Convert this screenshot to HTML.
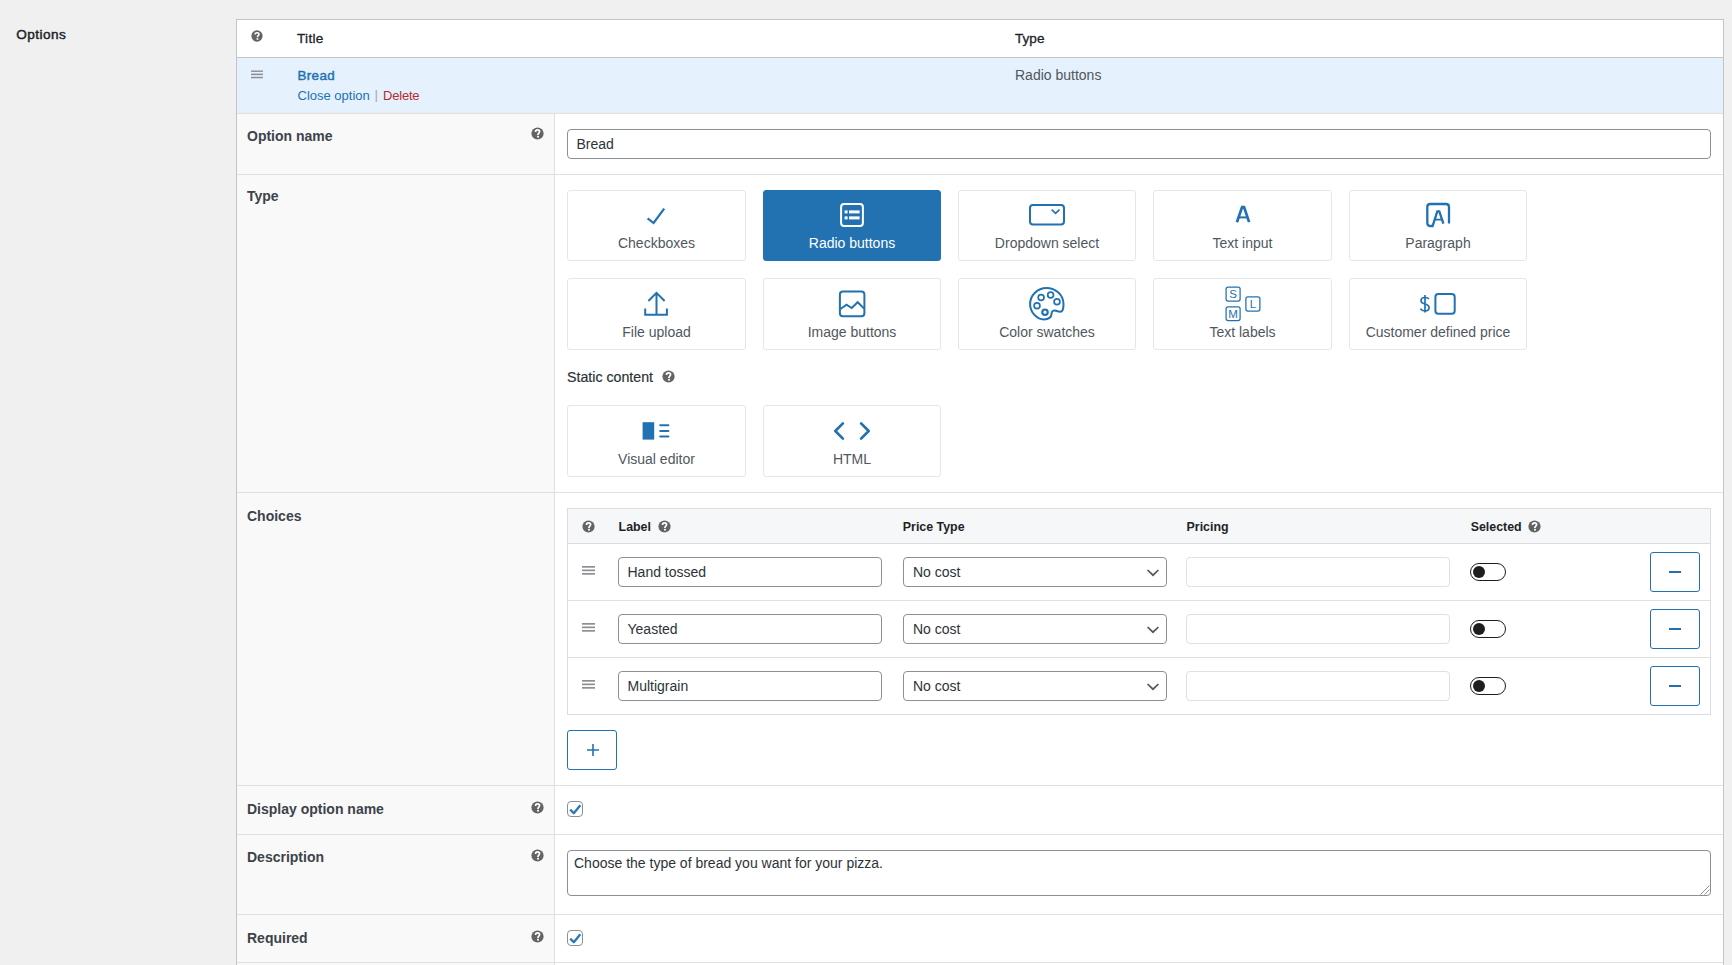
<!DOCTYPE html>
<html><head><meta charset="utf-8"><style>
*{box-sizing:border-box;margin:0;padding:0}
html,body{width:1732px;height:965px;overflow:hidden}
body{background:#f0f0f1;position:relative;font-family:"Liberation Sans",sans-serif;color:#3c434a;font-size:14px}
.a{position:absolute}
.t{position:absolute;white-space:nowrap;line-height:1}
.b{font-weight:bold}
.sb{-webkit-text-stroke:0.45px currentColor}
.ln{position:absolute;background:#e0e0e0}
.hp{position:absolute;width:13px;height:13px}
.box{position:absolute;height:71px;border:1px solid #e6e6e6;border-radius:3px;background:#fff}
.box.sel{background:#2271b1;border-color:#2271b1}
.box svg{position:absolute;left:-1px;top:-1px}
.box .cap{position:absolute;left:0;right:0;top:45.2px;text-align:center;line-height:14px;font-size:14px;color:#50575e;white-space:nowrap}
.box.sel .cap{color:#fff}
.inp{position:absolute;height:30px;border:1px solid #8c8f94;border-radius:4px;background:#fff}
.dis{border-color:#e0e0e0;background:#fff}
.btn{position:absolute;width:50px;height:40px;border:1px solid #2271b1;border-radius:3px;background:#fff}
.tog{position:absolute;width:36px;height:18px;border:1.5px solid #1e1e1e;border-radius:9px;background:#fff}
.tog::after{content:"";position:absolute;left:1.5px;top:1.5px;width:12px;height:12px;border-radius:50%;background:#1e1e1e}
.chk{position:absolute;width:16px;height:16px;border:1px solid #8c8f94;border-radius:4px;background:#fff}
</style></head><body>
<svg width="0" height="0" style="position:absolute"><defs><symbol id="help" viewBox="0 0 13 13"><circle cx="6.5" cy="6.5" r="6.1" fill="#626365"/><path d="M4.5 4.9C4.5 3.6 5.4 2.9 6.6 2.9C7.8 2.9 8.6 3.6 8.6 4.6C8.6 5.9 7 6.1 7 7.3V7.9" fill="none" stroke="#fff" stroke-width="1.7"/><rect x="6.1" y="8.8" width="1.8" height="1.8" fill="#fff"/></symbol><symbol id="drag" viewBox="0 0 13 9"><rect x="0" y="0" width="13" height="1.7" fill="#8c8f94"/><rect x="0" y="3.5" width="13" height="1.7" fill="#8c8f94"/><rect x="0" y="7" width="13" height="1.7" fill="#8c8f94"/></symbol></defs></svg>
<div class="t sb" style="left:16.3px;top:28px;font-size:13.6px;letter-spacing:0.45px;color:#1d2327">Options</div>
<div class="a" style="left:236px;top:19px;width:1488px;height:960px;border:1px solid #c3c4c7;background:#fff"></div>
<svg class="hp" style="left:251px;top:30px;width:12px;height:12px"><use href="#help"/></svg>
<div class="t" style="left:297px;top:31.5px;font-size:13.6px;letter-spacing:0.3px;-webkit-text-stroke:0.3px #1d2327;color:#1d2327">Title</div>
<div class="t" style="left:1015px;top:31.5px;font-size:13.6px;-webkit-text-stroke:0.3px #1d2327;color:#1d2327">Type</div>
<div class="a" style="left:237px;top:57px;width:1486px;height:1px;background:#c3c4c7"></div>
<div class="a" style="left:237px;top:58px;width:1486px;height:54px;background:#e5f1fd"></div>
<svg class="a" style="left:251px;top:70.2px;width:12px;height:9px" viewBox="0 0 13 9"><use href="#drag"/></svg>
<div class="t sb" style="left:297.4px;top:68.6px;font-size:13.4px;letter-spacing:0.4px;color:#2271b1">Bread</div>
<div class="t" style="left:297.5px;top:88.7px;font-size:13px;color:#2271b1">Close option</div>
<div class="t" style="left:374.5px;top:88.2px;font-size:13.5px;color:#a7aaad">|</div>
<div class="t" style="left:383px;top:88.7px;font-size:13px;color:#b32d2e;letter-spacing:-0.2px">Delete</div>
<div class="t" style="left:1015px;top:67.8px;font-size:14px;color:#50575e">Radio buttons</div>
<div class="a" style="left:237px;top:112px;width:1486px;height:1px;background:#ededed"></div>
<div class="ln" style="left:237px;top:113px;width:1486px;height:1px"></div>
<div class="a" style="left:237px;top:114px;width:317px;height:860px;background:#f9f9f9"></div>
<div class="ln" style="left:554px;top:114px;width:1px;height:860px"></div>
<div class="ln" style="left:237px;top:174px;width:1486px;height:1px"></div>
<div class="ln" style="left:237px;top:492px;width:1486px;height:1px"></div>
<div class="ln" style="left:237px;top:785px;width:1486px;height:1px"></div>
<div class="ln" style="left:237px;top:834px;width:1486px;height:1px"></div>
<div class="ln" style="left:237px;top:914px;width:1486px;height:1px"></div>
<div class="ln" style="left:237px;top:962px;width:1486px;height:1px"></div>
<div class="t b" style="left:247px;top:129.3px;font-size:14px;color:#3c434a">Option name</div>
<div class="t b" style="left:247px;top:189.3px;font-size:14px;color:#3c434a">Type</div>
<div class="t b" style="left:247px;top:509.2px;font-size:14px;color:#3c434a">Choices</div>
<div class="t b" style="left:247px;top:802.2px;font-size:14px;color:#3c434a">Display option name</div>
<div class="t b" style="left:247px;top:850.2px;font-size:14px;color:#3c434a">Description</div>
<div class="t b" style="left:247px;top:931.3px;font-size:14px;color:#3c434a">Required</div>
<svg class="hp" style="left:531px;top:127.1px"><use href="#help"/></svg>
<svg class="hp" style="left:531px;top:800.5px"><use href="#help"/></svg>
<svg class="hp" style="left:531px;top:848.7px"><use href="#help"/></svg>
<svg class="hp" style="left:531px;top:929.5px"><use href="#help"/></svg>
<div class="inp" style="left:567px;top:129px;width:1144px;height:30px"></div>
<div class="t" style="left:576.5px;top:136.8px;font-size:14px;color:#2c3338">Bread</div>
<div class="box" style="left:567px;top:190px;width:179px;height:71px"><svg width="179" height="71"><polyline points="80.6,28.3 86.6,33 97.2,18.6" fill="none" stroke="#2271b1" stroke-width="2.2"/></svg><div class="cap" style="top:45.2px">Checkboxes</div></div>
<div class="box sel" style="left:763px;top:190px;width:178px;height:71px"><svg width="178" height="71"><rect x="78.1" y="14" width="21.8" height="21.9" rx="3" fill="none" stroke="#fff" stroke-width="2"/><rect x="81.6" y="20.4" width="3" height="3" fill="#fff"/><rect x="81.6" y="26.4" width="3" height="3" fill="#fff"/><rect x="86" y="20.4" width="10.6" height="3" fill="#fff"/><rect x="86" y="26.4" width="10.6" height="3" fill="#fff"/></svg><div class="cap" style="top:45.2px">Radio buttons</div></div>
<div class="box" style="left:958px;top:190px;width:178px;height:71px"><svg width="178" height="71"><rect x="72" y="15.1" width="34" height="19.5" rx="3" fill="none" stroke="#2271b1" stroke-width="2"/><polyline points="93.6,19.6 97.6,23.4 101.5,19.6" fill="none" stroke="#2271b1" stroke-width="1.6"/></svg><div class="cap" style="top:45.2px">Dropdown select</div></div>
<div class="box" style="left:1153px;top:190px;width:179px;height:71px"><svg width="179" height="71"><path d="M83.9,32.2 L89.1,17.1 H91.1 L96.1,32.2" fill="none" stroke="#2271b1" stroke-width="2.7"/><path d="M85.6,27.4 H94.4" stroke="#2271b1" stroke-width="2"/></svg><div class="cap" style="top:45.2px">Text input</div></div>
<div class="box" style="left:1349px;top:190px;width:178px;height:71px"><svg width="178" height="71"><path d="M100,33.6 V17 Q100,14 97,14 H81.3 Q78.3,14 78.3,17 V33 Q78.3,36 81.3,36 H83.6 L88.3,21.4 H90.3 L94.4,33.6" fill="none" stroke="#2271b1" stroke-width="2.3"/><path d="M85.7,29.6 H92.6" stroke="#2271b1" stroke-width="1.8"/></svg><div class="cap" style="top:45.2px">Paragraph</div></div>
<div class="box" style="left:567px;top:278px;width:179px;height:72px"><svg width="179" height="72"><path d="M81.4,23 L89.5,14.9 L97.6,23 M89.5,15.5 V36.5 M78.2,30.5 V36.7 H99.9 V30.5" fill="none" stroke="#2271b1" stroke-width="2"/></svg><div class="cap" style="top:46.0px">File upload</div></div>
<div class="box" style="left:763px;top:278px;width:178px;height:72px"><svg width="178" height="72"><rect x="76.9" y="13.6" width="24.5" height="24.6" rx="3" fill="none" stroke="#2271b1" stroke-width="2"/><polyline points="77.1,31.3 83.5,26.7 88.7,30 94.7,24.2 101.2,30.6" fill="none" stroke="#2271b1" stroke-width="2"/></svg><div class="cap" style="top:46.0px">Image buttons</div></div>
<div class="box" style="left:958px;top:278px;width:178px;height:72px"><svg width="178" height="72"><g transform="translate(69,6)" fill="none" stroke="#2271b1"><path d="M24.5,30 C24.5,27 26.5,26 29,26.8 C31.5,27.6 33.5,28.5 35,27 C36.5,25.5 36.5,22 36.5,20 C36.5,11 28.5,3.9 19.5,3.9 C10.5,3.9 3.1,11.3 3.1,20 C3.1,28.5 10,35.5 17,35.5 C21.5,35.5 24.5,33 24.5,30 Z" stroke-width="2"/><circle cx="14.1" cy="13.5" r="2.9" stroke-width="1.7"/><circle cx="23.6" cy="11" r="2.9" stroke-width="1.7"/><circle cx="30" cy="17.8" r="2.9" stroke-width="1.7"/><circle cx="10" cy="21.8" r="2.9" stroke-width="1.7"/><circle cx="18" cy="28.2" r="2.7" stroke-width="2.2"/></g></svg><div class="cap" style="top:46.0px">Color swatches</div></div>
<div class="box" style="left:1153px;top:278px;width:179px;height:72px"><svg width="179" height="72"><g fill="none" stroke="#2271b1" stroke-width="1.25"><rect x="73.1" y="9" width="14" height="14" rx="2"/><rect x="73.1" y="28.8" width="14" height="13.8" rx="2"/><rect x="92.9" y="18.8" width="14" height="14.2" rx="2"/></g><g fill="#2271b1" font-family="Liberation Sans" font-size="11.5" text-anchor="middle"><text x="80.1" y="20.2">S</text><text x="80.1" y="39.9">M</text><text x="99.9" y="30.1">L</text></g></svg><div class="cap" style="top:46.0px">Text labels</div></div>
<div class="box" style="left:1349px;top:278px;width:178px;height:72px"><svg width="178" height="72"><g transform="translate(63,6)" fill="none" stroke="#2271b1" stroke-width="1.7"><path d="M16.9,14.9 C16,13.9 14.6,13.5 13.1,13.5 C10.6,13.5 9,14.8 9,16.7 C9,21.1 17.1,18.9 17.1,23.5 C17.1,25.6 15.4,26.9 13,26.9 C11,26.9 9.3,26.1 8.4,24.6"/><path d="M13,11 V28.6"/></g><rect x="86.4" y="16.1" width="19.3" height="19.6" rx="3" fill="none" stroke="#2271b1" stroke-width="2"/></svg><div class="cap" style="top:46.0px">Customer defined price</div></div>
<div class="box" style="left:567px;top:405px;width:179px;height:72px"><svg width="179" height="72"><rect x="75.6" y="17.2" width="11.6" height="17.4" fill="#2271b1"/><g stroke="#2271b1" stroke-width="2" stroke-linecap="round"><path d="M93.2,20.3 H101.4 M93.2,26.1 H101.4 M93.2,31.5 H101.4"/></g></svg><div class="cap" style="top:46.0px">Visual editor</div></div>
<div class="box" style="left:763px;top:405px;width:178px;height:72px"><svg width="178" height="72"><g fill="none" stroke="#2271b1" stroke-width="2.7" stroke-linecap="round" stroke-linejoin="round"><polyline points="79.9,18.4 72.3,26 79.9,33.6"/><polyline points="98.1,18.4 105.7,26 98.1,33.6"/></g></svg><div class="cap" style="top:46.0px">HTML</div></div>
<div class="t" style="left:567px;top:370.2px;font-size:14.2px;color:#2c3338;-webkit-text-stroke:0.2px #2c3338">Static content</div>
<svg class="hp" style="left:662.2px;top:370.2px"><use href="#help"/></svg>
<div class="a" style="left:567px;top:508px;width:1144px;height:207px;border:1px solid #dcdcde;background:#fff"></div>
<div class="a" style="left:568px;top:509px;width:1142px;height:35px;background:#f6f7f9;border-bottom:1px solid #dcdcde"></div>
<svg class="hp" style="left:582px;top:519.5px"><use href="#help"/></svg>
<div class="t b" style="left:618.6px;top:520.8px;font-size:12.4px;color:#1d2327">Label</div>
<div class="t b" style="left:902.8px;top:520.8px;font-size:12.4px;color:#1d2327">Price Type</div>
<div class="t b" style="left:1186.6px;top:520.8px;font-size:12.4px;color:#1d2327">Pricing</div>
<div class="t b" style="left:1470.7px;top:520.8px;font-size:12.4px;color:#1d2327">Selected</div>
<svg class="hp" style="left:657.5px;top:519.5px"><use href="#help"/></svg>
<svg class="hp" style="left:1528px;top:519.5px"><use href="#help"/></svg>
<div class="ln" style="left:568px;top:600px;width:1142px;height:1px"></div>
<svg class="a" style="left:582px;top:566px;width:13px;height:9px" viewBox="0 0 13 9"><use href="#drag"/></svg>
<div class="inp" style="left:618px;top:557px;width:264px"></div>
<div class="t" style="left:627.5px;top:565px;font-size:14px;color:#2c3338">Hand tossed</div>
<div class="inp" style="left:903px;top:557px;width:264px"></div>
<div class="t" style="left:913px;top:565px;font-size:14px;color:#2c3338">No cost</div>
<svg class="a" style="left:1146px;top:568px;width:14px;height:10px"><polyline points="1.6,2 7,7.2 12.4,2" fill="none" stroke="#555" stroke-width="1.7"/></svg>
<div class="inp dis" style="left:1186px;top:557px;width:264px"></div>
<div class="tog" style="left:1470px;top:563px"></div>
<div class="btn" style="left:1650px;top:552px"><div class="a" style="left:18px;top:17.6px;width:12px;height:2px;background:#2271b1"></div></div>
<div class="ln" style="left:568px;top:657px;width:1142px;height:1px"></div>
<svg class="a" style="left:582px;top:623px;width:13px;height:9px" viewBox="0 0 13 9"><use href="#drag"/></svg>
<div class="inp" style="left:618px;top:614px;width:264px"></div>
<div class="t" style="left:627.5px;top:622px;font-size:14px;color:#2c3338">Yeasted</div>
<div class="inp" style="left:903px;top:614px;width:264px"></div>
<div class="t" style="left:913px;top:622px;font-size:14px;color:#2c3338">No cost</div>
<svg class="a" style="left:1146px;top:625px;width:14px;height:10px"><polyline points="1.6,2 7,7.2 12.4,2" fill="none" stroke="#555" stroke-width="1.7"/></svg>
<div class="inp dis" style="left:1186px;top:614px;width:264px"></div>
<div class="tog" style="left:1470px;top:620px"></div>
<div class="btn" style="left:1650px;top:609px"><div class="a" style="left:18px;top:17.6px;width:12px;height:2px;background:#2271b1"></div></div>
<svg class="a" style="left:582px;top:680px;width:13px;height:9px" viewBox="0 0 13 9"><use href="#drag"/></svg>
<div class="inp" style="left:618px;top:671px;width:264px"></div>
<div class="t" style="left:627.5px;top:679px;font-size:14px;color:#2c3338">Multigrain</div>
<div class="inp" style="left:903px;top:671px;width:264px"></div>
<div class="t" style="left:913px;top:679px;font-size:14px;color:#2c3338">No cost</div>
<svg class="a" style="left:1146px;top:682px;width:14px;height:10px"><polyline points="1.6,2 7,7.2 12.4,2" fill="none" stroke="#555" stroke-width="1.7"/></svg>
<div class="inp dis" style="left:1186px;top:671px;width:264px"></div>
<div class="tog" style="left:1470px;top:677px"></div>
<div class="btn" style="left:1650px;top:666px"><div class="a" style="left:18px;top:17.6px;width:12px;height:2px;background:#2271b1"></div></div>
<div class="btn" style="left:567px;top:730px"><svg class="a" style="left:18px;top:12.2px" width="14" height="14"><path d="M1,7 H13 M7,1 V13" stroke="#2271b1" stroke-width="1.6"/></svg></div>
<div class="chk" style="left:567px;top:801px"><svg class="a" style="left:-1px;top:-1px" width="16" height="16"><path d="M3.2,8.6 L6.8,12.2 L13.3,4.2" fill="none" stroke="#2a78bb" stroke-width="2.3" stroke-linejoin="round"/></svg></div>
<div class="inp" style="left:567px;top:850px;width:1144px;height:46px"></div>
<div class="t" style="left:574px;top:855.8px;font-size:14px;color:#2c3338">Choose the type of bread you want for your pizza.</div>
<svg class="a" style="left:1698px;top:883px" width="13" height="13"><path d="M2.5,11.5 L11.5,2.5 M6.5,11.5 L11.5,6.5" stroke="#8c8f94" stroke-width="1"/></svg>
<div class="chk" style="left:567px;top:930px"><svg class="a" style="left:-1px;top:-1px" width="16" height="16"><path d="M3.2,8.6 L6.8,12.2 L13.3,4.2" fill="none" stroke="#2a78bb" stroke-width="2.3" stroke-linejoin="round"/></svg></div>
</body></html>
